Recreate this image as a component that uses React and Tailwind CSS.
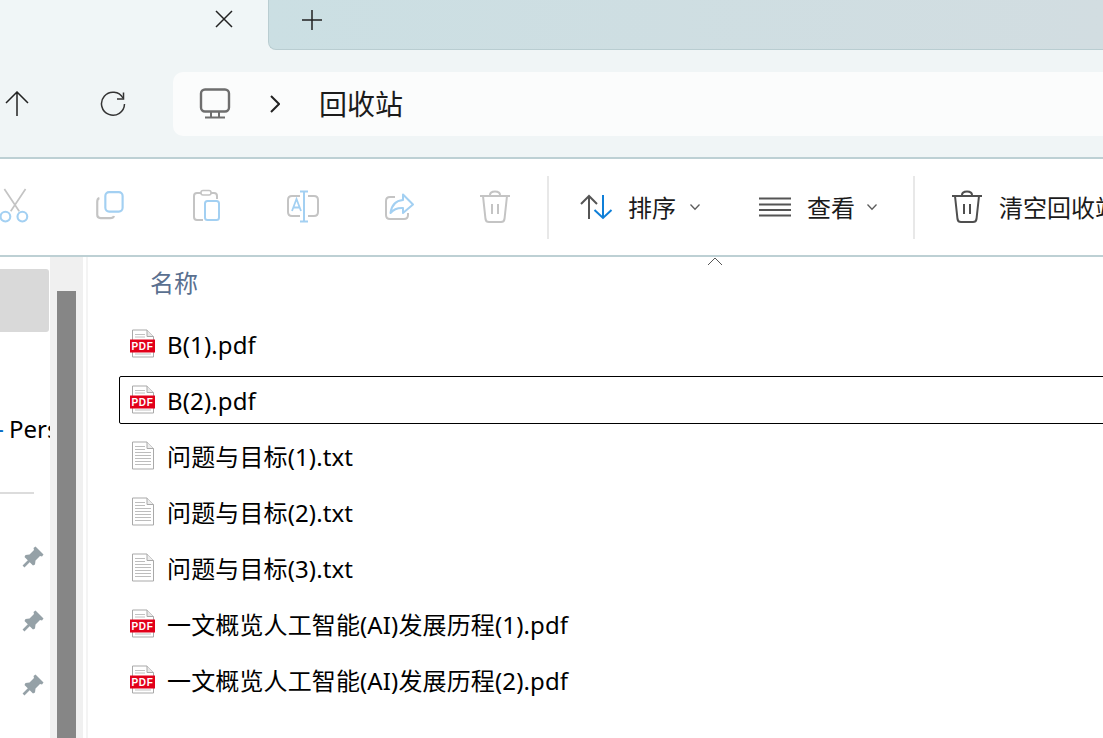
const font = { fontFamily: '"Noto Sans CJK SC", sans-serif' };
const G = "#c4c4c4", B = "#a3d0f2";

function Svg({ w, h, s = 1, children, className = "" }) {
  return <svg width={w * s} height={h * s} viewBox={`0 0 ${w} ${h}`} fill="none" className={`shrink-0 ${className}`}>{children}</svg>;
}
const Cut = () => (
  <Svg w={32} h={36} s={1.06}>
    <path d="M6 1 L20 22 M26 1 L12 22" stroke={G} strokeWidth="1.6" />
    <circle cx="7" cy="27" r="4.6" stroke={B} strokeWidth="2" />
    <circle cx="23" cy="27" r="4.6" stroke={B} strokeWidth="2" />
  </Svg>
);
const Copy = () => (
  <Svg w={32} h={32} s={1.08}>
    <path d="M5 7.5 Q3 8 3 11 V23 Q3 26 6 26 H15 Q18 26 18.5 24" stroke={G} strokeWidth="2" />
    <rect x="10.5" y="2" width="16" height="18" rx="3.5" stroke={B} strokeWidth="2" />
  </Svg>
);
const Paste = () => (
  <Svg w={32} h={36}>
    <path d="M12 31 H6 Q3 31 3 28 V7 Q3 4 6 4 H10 M20 4 H23 Q26 4 26 7 V10" stroke={G} strokeWidth="2" />
    <rect x="10" y="1.5" width="10" height="4.5" rx="2" stroke={G} strokeWidth="1.6" />
    <rect x="14" y="12" width="14" height="19" rx="2.5" stroke={B} strokeWidth="2" />
  </Svg>
);
const Rename = () => (
  <Svg w={34} h={34}>
    <path d="M14 6 H6 Q2 6 2 10 V22 Q2 26 6 26 H14 M22 6 H28 Q32 6 32 10 V22 Q32 26 28 26 H22" stroke={G} strokeWidth="2" />
    <path d="M18 2 V31 M14 1.5 H22 M14 31.5 H22" stroke={B} strokeWidth="2" />
    <path d="M6 21 L10.5 9 L15 21 M7.5 17.5 H13.5" stroke={B} strokeWidth="1.8" />
  </Svg>
);
const Share = () => (
  <Svg w={32} h={30}>
    <path d="M12 5 H7 Q3 5 3 9 V23 Q3 27 7 27 H21 Q25 27 25 23 V21" stroke={G} strokeWidth="2" />
    <path d="M20 2.5 L30 12.5 L20 21 V16 Q12 15.5 7.5 21 Q9 9 20 8 Z" stroke={B} strokeWidth="2" strokeLinejoin="round" />
  </Svg>
);
const Trash = ({ c }) => (
  <Svg w={32} h={34}>
    <path d="M1 6 H31 M11 5 Q11 1.5 16 1.5 Q21 1.5 21 5" stroke={c} strokeWidth="2" />
    <path d="M4 6 L6.5 29 Q7 32 10 32 H22 Q25 32 25.5 29 L28 6" stroke={c} strokeWidth="2" />
    <path d="M13 14 V24 M19 14 V24" stroke={c} strokeWidth="2" />
  </Svg>
);
const Chevron = () => (
  <Svg w={12} h={8}><path d="M1.5 1.5 L6 6.3 L10.5 1.5" stroke="#5c5c5c" strokeWidth="1.3" /></Svg>
);
const PdfIcon = () => (
  <svg width="26" height="30" viewBox="0 0 26 30" className="shrink-0">
    <path d="M2.5 1 H17 L23.5 7.5 V28 H2.5 Z" fill="#fff" stroke="#a9a9a9" strokeWidth="1" />
    <path d="M17 1 V7.5 H23.5" fill="#e8e8e8" stroke="#a9a9a9" strokeWidth="1" />
    <path d="M5 5.5 H15 M5 8 H15 M5 25 H21" stroke="#c2c2c2" strokeWidth="1" />
    <rect x="0" y="10.5" width="25" height="13" fill="#e2001a" />
    <text x="12.5" y="21" textAnchor="middle" fill="#fff" fontSize="10" fontWeight="700" letterSpacing="0.6" fontFamily="'Liberation Sans', sans-serif">PDF</text>
  </svg>
);
const TxtIcon = () => (
  <svg width="26" height="30" viewBox="0 0 26 30" className="shrink-0">
    <path d="M2.5 1 H17 L23.5 7.5 V28 H2.5 Z" fill="#fff" stroke="#a9a9a9" strokeWidth="1" />
    <path d="M17 1 V7.5 H23.5" fill="#ececec" stroke="#a9a9a9" strokeWidth="1" />
    <path d="M5 5.5 H15 M5 8.5 H15 M5 11.5 H21 M5 14.5 H21 M5 17.5 H21 M5 20.5 H21 M5 23.5 H21" stroke="#bdbdbd" strokeWidth="1" />
  </svg>
);
const Pin = () => (
  <Svg w={22} h={22}>
    <path d="M13.5 0.5 L21.5 8.5 L20 10.5 L18 10 L13.5 14.5 L13 18.5 L11 19.5 L2.5 11 L3.5 9 L7.5 8.5 L12 4 L11.5 2 Z" fill="#95a1a7" />
    <path d="M7.5 14.5 L1.5 20.5" stroke="#95a1a7" strokeWidth="2.6" />
  </Svg>
);

const files = [
  ["B(1).pdf", "pdf"],
  ["B(2).pdf", "pdf", true],
  ["问题与目标(1).txt", "txt"],
  ["问题与目标(2).txt", "txt"],
  ["问题与目标(3).txt", "txt"],
  ["一文概览人工智能(AI)发展历程(1).pdf", "pdf"],
  ["一文概览人工智能(AI)发展历程(2).pdf", "pdf"],
];

export default function App() {
  return (
    <div style={font} className="w-[1103px] h-[738px] overflow-hidden bg-white flex flex-col text-[#1b1b1b]">
      <div className="h-[50px] flex bg-[#f0f6f7] shrink-0">
        <div className="w-[268px] flex justify-end items-center pb-[12px] pr-[35px]">
          <svg width="18" height="18" viewBox="0 0 18 18" fill="none"><path d="M1 1 L17 17 M17 1 L1 17" stroke="#222" strokeWidth="1.5" /></svg>
        </div>
        <div className="flex-1 bg-gradient-to-r from-[#cbdfe3] to-[#d2dde1] rounded-bl-[8px] border-l border-b border-[#b9cdd1] flex items-start pt-[10px] pl-[33px]">
          <svg width="20" height="20" viewBox="0 0 20 20" fill="none"><path d="M10 0 V20 M0 10 H20" stroke="#222" strokeWidth="1.5" /></svg>
        </div>
      </div>

      <div className="h-[109px] shrink-0 bg-[#f0f5f6] border-b-2 border-[#bdd0d4] flex items-start pt-[22px]">
        <div className="w-[173px] h-[64px] shrink-0 flex items-center">
          <svg width="24" height="26" viewBox="0 0 24 26" fill="none" className="ml-[5px] shrink-0"><path d="M12 1 V25 M1 12 L12 1 L23 12" stroke="#222" strokeWidth="1.5" /></svg>
          <svg width="26" height="26" viewBox="0 0 26 26" fill="none" className="ml-[71px] shrink-0"><path d="M23 7 A11.5 11.5 0 1 0 24.5 13" stroke="#333" strokeWidth="1.5" /><path d="M23.5 1.5 V8 H17" stroke="#333" strokeWidth="1.5" /></svg>
        </div>
        <div className="flex-1 h-[64px] bg-[#fbfcfc] rounded-l-[10px] flex items-center">
          <svg width="32" height="32" viewBox="0 0 32 32" fill="none" className="ml-[26px] shrink-0">
            <rect x="2" y="1.5" width="28" height="22" rx="4" stroke="#6e6e6e" strokeWidth="2.4" />
            <path d="M12 24 V29 M20 24 V29 M6 29.5 H26" stroke="#6e6e6e" strokeWidth="2" />
          </svg>
          <svg width="10" height="18" viewBox="0 0 10 18" fill="none" className="ml-[39px] shrink-0"><path d="M1 1 L9 9 L1 17" stroke="#222" strokeWidth="2" /></svg>
          <span className="ml-[39px] pb-[2px] text-[28px] leading-none">回收站</span>
        </div>
      </div>

      <div className="h-[98px] shrink-0 border-b-2 border-[#bdd0d4] flex items-center whitespace-nowrap">
        <div className="flex -ml-[33px] items-center shrink-0">
          {[Cut, Copy, Paste, Rename, Share].map((I, i) => (
            <div key={i} className="w-[96px] flex justify-center shrink-0"><I /></div>
          ))}
          <div className="w-[96px] flex justify-center shrink-0"><Trash c="#c4c4c4" /></div>
        </div>
        <div className="ml-[4px] w-[2px] h-[63px] bg-[#e8e8e8] shrink-0" />
        <svg width="34" height="26" viewBox="0 0 34 26" fill="none" className="ml-[30px] shrink-0">
          <path d="M10 25 V2 M2 10 L10 2 L18 10" stroke="#555" strokeWidth="2" />
          <path d="M24 1 V24 M15.5 16 L24 24 L32.5 16" stroke="#0f7fd8" strokeWidth="2" />
        </svg>
        <span className="ml-[15px] text-[24px] leading-none shrink-0">排序</span>
        <div className="ml-[13px] shrink-0"><Chevron /></div>
        <svg width="32" height="20" viewBox="0 0 32 20" fill="none" className="ml-[58px] shrink-0"><path d="M0 1.5 H32 M0 7.5 H32 M0 13 H32 M0 18.5 H32" stroke="#555" strokeWidth="2" /></svg>
        <span className="ml-[16px] text-[24px] leading-none shrink-0">查看</span>
        <div className="ml-[11px] shrink-0"><Chevron /></div>
        <div className="ml-[35px] w-[2px] h-[63px] bg-[#e8e8e8] shrink-0" />
        <div className="ml-[36px] shrink-0"><Trash c="#4f4f4f" /></div>
        <span className="ml-[16px] text-[24px] leading-none shrink-0">清空回收站</span>
      </div>

      <div className="flex-1 flex min-h-0 relative">
        <div className="w-[50px] shrink-0 overflow-hidden flex flex-col">
          <div className="mt-[12px] h-[63px] w-[49px] bg-[#d9d9d9] rounded-r-[3px] shrink-0" />
          <div className="mt-[79px] h-[36px] flex items-center whitespace-nowrap text-[24px] text-black shrink-0">
            <span className="text-[#0a6cc4] -ml-[4px]" style={{ fontFamily: "Liberation Sans" }}>-</span>
            <span className="ml-[5px]" style={{ fontFamily: '"Noto Sans", sans-serif' }}>Personal</span>
          </div>
          <div className="mt-[45px] w-[34px] h-[2px] bg-[#dcdcdc] shrink-0" />
          <div className="mt-[52px] flex flex-col items-end gap-[42px] pr-[6px]">
            <Pin /><Pin /><Pin />
          </div>
        </div>
        <div className="w-[33px] shrink-0 bg-[#f0f0f0] flex flex-col pt-[34px] items-center">
          <div className="w-[19px] flex-1 bg-[#868686]" />
        </div>
        <div className="w-[3px] shrink-0" />
        <div className="w-[2px] shrink-0 bg-[#f4f4f4]" />
        <div className="flex-1 min-w-0 pl-[30px] relative">
          <svg width="16" height="9" viewBox="0 0 16 9" fill="none" className="absolute left-[619px] top-0"><path d="M1 8 L8 1 L15 8" stroke="#555" strokeWidth="1" /></svg>
          <div className="pl-[32px] h-[62px] pt-[7px] text-[24px] leading-[36px] text-[#5a7090]">名称</div>
          <div className="flex flex-col gap-[8px] pt-[1px] pl-[1px]">
            {files.map(([name, type, focus]) => (
              <div key={name} className={`h-[48px] flex items-center pl-[10px] -mr-[6px] rounded-[2px] text-[24px] text-black whitespace-nowrap ${focus ? "border border-black" : "border border-transparent"}`}>
                {type === "pdf" ? <PdfIcon /> : <TxtIcon />}
                <span className="ml-[11px] pt-[2px] tracking-[0.13px]" style={{ fontFamily: '"Noto Sans", "Noto Sans CJK SC", sans-serif' }}>{name}</span>
              </div>
            ))}
          </div>
        </div>
      </div>
    </div>
  );
}
